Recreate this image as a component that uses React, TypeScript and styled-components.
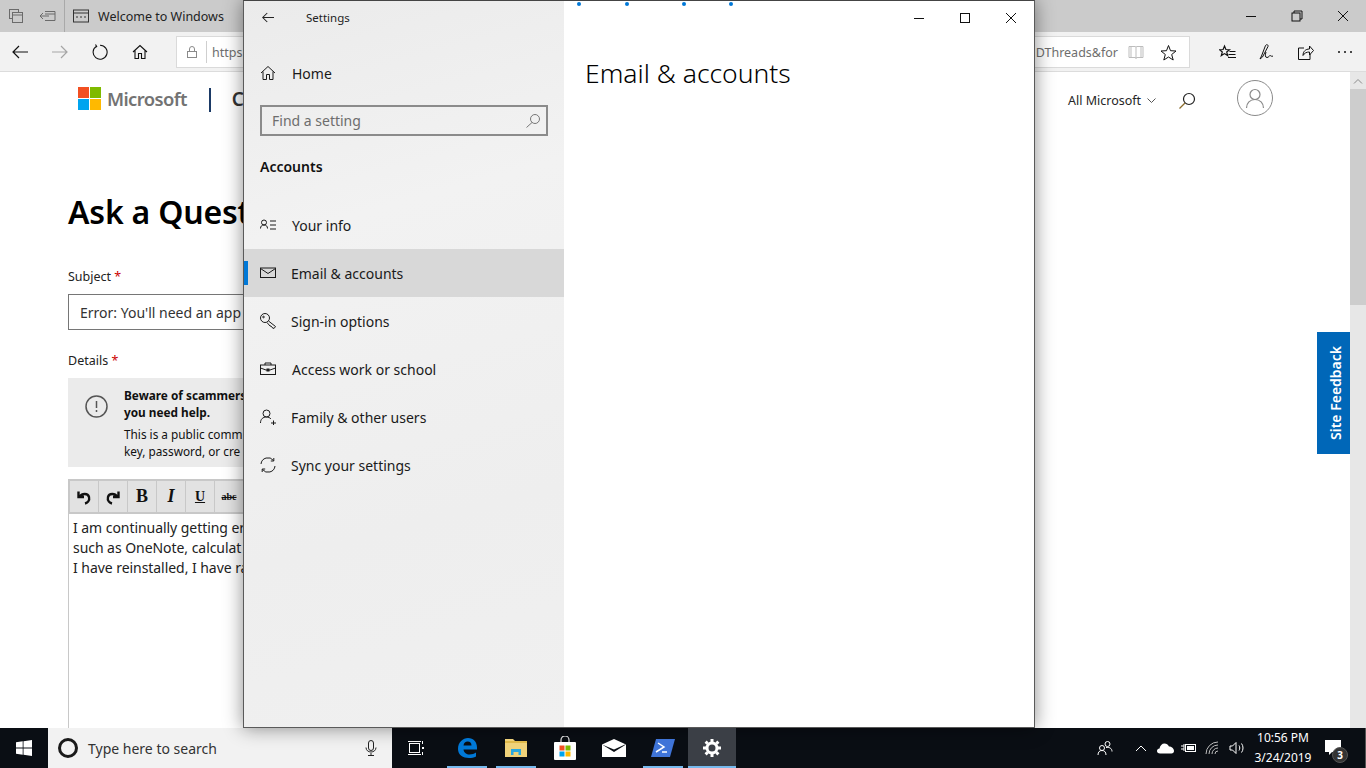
import React from 'react';
import styled, { createGlobalStyle } from 'styled-components';

const Global = createGlobalStyle`
  html, body { margin: 0; padding: 0; height: 100%; overflow: hidden; background: #fff; }
  body { font-family: 'Noto Sans', 'Open Sans', sans-serif; color: #000; }
  * { box-sizing: border-box; }
  svg { display: block; flex-shrink: 0; }
`;

const Desktop = styled.div`
  position: relative;
  width: 1366px;
  height: 768px;
  display: flex;
  flex-direction: column;
  overflow: hidden;
`;

/* browser window */
const Browser = styled.div`
  height: 728px;
  display: flex;
  flex-direction: column;
`;

const TabBar = styled.div`
  height: 32px;
  background: #cbcbcb;
  display: flex;
  align-items: center;
`;

const TabIconBtn = styled.div`
  width: 32px;
  display: flex;
  justify-content: center;
`;

const TabSep = styled.div`
  width: 1px;
  height: 32px;
  background: #a9a9a9;
  margin-right: 8px;
`;

const TabTitle = styled.span`
  font-size: 12.5px;
  margin-left: 9px;
  color: #222;
  flex: 1;
`;

const ChromeCtl = styled.div`
  width: 46px;
  display: flex;
  justify-content: center;
`;

const Toolbar = styled.div`
  height: 40px;
  background: #f2f2f2;
  border-bottom: 1px solid #dcdcdc;
  display: flex;
  align-items: center;
  padding-top: 1px;
`;

const NavBtn = styled.div`
  width: 40px;
  display: flex;
  justify-content: center;
`;

const UrlBox = styled.div`
  width: 1014px;
  height: 32px;
  margin: 0 18px 0 16px;
  background: #fff;
  border: 1px solid #dadada;
  display: flex;
  align-items: center;
  font-size: 12.5px;
  color: #6e6e6e;
`;

const LockWrap = styled.div`
  width: 30px;
  height: 22px;
  border-right: 1px solid #cfcfcf;
  display: flex;
  justify-content: center;
  align-items: center;
`;

const UrlText = styled.span`
  margin-left: 5px;
  flex: 1;
`;

const UrlEnd = styled.span`
  margin-right: 2px;
`;

const UrlIcon = styled.div<{ $end?: number }>`
  width: 32px;
  display: flex;
  justify-content: center;
  margin-right: ${(p) => p.$end ?? 0}px;
`;

const ToolBtn = styled.div`
  width: 39px;
  display: flex;
  justify-content: center;
`;

const PageArea = styled.div`
  flex: 1;
  display: flex;
  min-height: 0;
`;

const Page = styled.main`
  position: relative;
  flex: 1;
  background: #fff;
  overflow: hidden;
  padding-left: 68px;
`;

const Scrollbar = styled.div`
  width: 16px;
  background: #e7e7e7;
  display: flex;
  flex-direction: column;
`;

const ScrollUp = styled.div`
  height: 17px;
  display: flex;
  align-items: center;
  justify-content: center;
`;

const ScrollThumb = styled.div`
  height: 216px;
  background: #cdcdcd;
`;

const SiteHeader = styled.div`
  height: 56px;
  display: flex;
  align-items: flex-start;
  padding-top: 15px;
  margin-left: 10px;
`;

const Brand = styled.span`
  font-size: 18.4px;
  font-weight: 600;
  color: #737373;
  letter-spacing: -0.6px;
  margin-left: 6px;
  line-height: 24px;
`;

const BrandSep = styled.div`
  width: 2px;
  height: 24px;
  background: #1b3a66;
  margin: 1px 21px 0 22px;
`;

const BrandNext = styled.span`
  font-size: 19px;
  color: #333;
  line-height: 24px;
  font-weight: 600;
`;

const HeaderRight = styled.div`
  position: absolute;
  left: 1068px;
  top: 15px;
  display: flex;
  align-items: center;
  height: 26px;
  font-size: 12.5px;
  color: #262626;
`;

const Chevron = styled.div`
  margin: 2px 0 0 6px;
`;

const HeaderSearch = styled.div`
  margin: 2px 0 0 22px;
`;

const Avatar = styled.div`
  width: 36px;
  height: 36px;
  border: 1px solid #8a8a8a;
  border-radius: 50%;
  margin: -4px 0 0 41px;
  display: flex;
  align-items: center;
  justify-content: center;
`;

const Heading = styled.h1`
  margin: 60px 0 0;
  font-size: 32px;
  line-height: 48px;
  font-weight: 600;
  letter-spacing: -0.2px;
  white-space: nowrap;
`;

const FieldLabel = styled.div<{ $top: number }>`
  font-size: 12.5px;
  line-height: 18px;
  margin-top: ${(p) => p.$top}px;
  color: #222;
`;

const Required = styled.span`
  color: #c00;
`;

const SubjectInput = styled.div`
  width: 700px;
  height: 36px;
  margin-top: 8px;
  border: 1px solid #767676;
  padding-left: 11px;
  font-size: 14px;
  line-height: 35px;
  color: #333;
  white-space: nowrap;
`;

const Notice = styled.div`
  width: 700px;
  height: 89px;
  margin-top: 8px;
  background: #ebebeb;
  display: flex;
  padding: 9px 0 0 17px;
`;

const NoticeIcon = styled.div`
  width: 39px;
  padding-top: 8px;
`;

const NoticeBody = styled.div`
  font-size: 11.8px;
  line-height: 17px;
  color: #111;
  white-space: nowrap;
`;

const NoticeStrong = styled.div`
  font-weight: 700;
  margin-bottom: 5px;
`;

const Editor = styled.div`
  width: 700px;
  height: 300px;
  margin-top: 12px;
  border: 1px solid #c8c8c8;
  border-bottom: none;
`;

const EditorTools = styled.div`
  height: 34px;
  background: #e2e2e2;
  border: 1px solid #c8c8c8;
  border-width: 1px 1px 2px 1px;
  display: flex;
`;

const EditorBtn = styled.div`
  width: 29px;
  border-right: 1px solid #c8c8c8;
  display: flex;
  align-items: center;
  justify-content: center;
  font-family: 'Liberation Serif', serif;
  color: #111;
`;

const FmtLetter = styled.span<{ $i?: boolean; $u?: boolean; $s?: boolean; $size: number }>`
  font-size: ${(p) => p.$size}px;
  font-weight: 700;
  font-style: ${(p) => (p.$i ? 'italic' : 'normal')};
  text-decoration: ${(p) => (p.$u ? 'underline' : p.$s ? 'line-through' : 'none')};
`;

const EditorText = styled.div`
  padding: 4px 4px;
  font-size: 14px;
  line-height: 20px;
  color: #222;
  letter-spacing: -0.05px;
  white-space: nowrap;
`;

const Feedback = styled.div`
  position: absolute;
  right: 0;
  top: 260px;
  width: 33px;
  height: 122px;
  padding-right: 3px;
  background: #0067b8;
  color: #fff;
  font-size: 14px;
  font-weight: 600;
  display: flex;
  align-items: center;
  justify-content: center;
  writing-mode: vertical-rl;
  transform: rotate(180deg);
`;

/* settings window */
const SettingsWindow = styled.section`
  position: absolute;
  left: 243px;
  top: 0;
  width: 792px;
  height: 728px;
  border: 1px solid #5a5a5a;
  border-top-color: #444;
  display: flex;
  background: #fff;
  box-shadow: 0 0 18px rgba(0, 0, 0, 0.45);
`;

const Sidebar = styled.aside`
  width: 320px;
  background: linear-gradient(165deg, #ebebeb 0%, #f2f2f2 30%, #eeeeee 70%, #f0f0f0 100%);
  display: flex;
  flex-direction: column;
`;

const TitleRow = styled.div`
  height: 33px;
  display: flex;
  align-items: center;
  padding-left: 18px;
  font-size: 11.5px;
  color: #222;
`;

const TitleLabel = styled.span`
  margin-left: 32px;
`;

const HomeWrap = styled.div`
  margin-top: 15px;
`;

const NavRow = styled.div<{ $active?: boolean; $gap?: number }>`
  position: relative;
  height: 48px;
  display: flex;
  align-items: center;
  padding-left: 16px;
  gap: ${(p) => p.$gap ?? 15}px;
  font-size: 14px;
  color: #1a1a1a;
  background: ${(p) => (p.$active ? '#d8d8d8' : 'transparent')};
`;

const ActiveBar = styled.div`
  position: absolute;
  left: 0;
  top: 12px;
  width: 4px;
  height: 24px;
  background: #0078d7;
`;

const SearchBox = styled.div`
  height: 31px;
  margin: 8px 16px 0;
  border: 2px solid #8b8b8b;
  display: flex;
  align-items: center;
  justify-content: space-between;
  padding: 0 6px 0 10px;
  font-size: 14px;
  color: #6d6d6d;
`;

const SectionTitle = styled.div`
  margin: 20px 0 23px 16px;
  height: 22px;
  line-height: 22px;
  font-size: 14px;
  font-weight: 600;
  color: #111;
`;

const Content = styled.div`
  position: relative;
  flex: 1;
  padding: 53px 0 0 21px;
`;

const ProgressDots = styled.div`
  position: absolute;
  top: 1px;
  left: 13px;
  display: flex;
`;

const Dot = styled.i<{ $gap: number }>`
  display: block;
  width: 4px;
  height: 4px;
  border-radius: 50%;
  background: #0078d7;
  margin-right: ${(p) => p.$gap}px;
`;

const PageTitle = styled.h2`
  margin: 0;
  font-size: 26.5px;
  line-height: 38px;
  font-weight: 300;
  color: #000;
`;

const WindowCtls = styled.div`
  position: absolute;
  top: 0;
  right: 0;
  display: flex;
`;

const WindowCtl = styled.div`
  width: 46px;
  height: 33px;
  display: flex;
  align-items: center;
  justify-content: center;
`;

/* taskbar */
const Taskbar = styled.footer`
  height: 40px;
  background: #0a0e14;
  display: flex;
  align-items: stretch;
`;

const StartBtn = styled.div`
  width: 48px;
  display: flex;
  align-items: center;
  justify-content: center;
`;

const TaskSearch = styled.div`
  width: 344px;
  background: #f2f2f2;
  display: flex;
  align-items: center;
  padding: 0 13px 0 10px;
  font-size: 14px;
  color: #333;
`;

const Cortana = styled.div`
  width: 20px;
  height: 20px;
  border: 3px solid #1a1a1a;
  border-radius: 50%;
  margin-right: 10px;
`;

const TaskSearchText = styled.span`
  flex: 1;
`;

const TaskView = styled.div`
  width: 48px;
  margin-right: 3px;
  display: flex;
  align-items: center;
  justify-content: center;
`;

const TaskApp = styled.div<{ $open?: boolean; $active?: boolean }>`
  position: relative;
  width: 48px;
  margin-right: 1px;
  display: flex;
  align-items: center;
  justify-content: center;
  background: ${(p) => (p.$active ? '#3b3f46' : 'transparent')};

  &::after {
    content: '';
    display: ${(p) => (p.$open ? 'block' : 'none')};
    position: absolute;
    bottom: 0;
    left: ${(p) => (p.$active ? 0 : 4)}px;
    right: ${(p) => (p.$active ? 0 : 4)}px;
    height: 2px;
    background: #76b9ed;
  }
`;

const Tray = styled.div`
  margin-left: auto;
  display: flex;
  align-items: center;
  color: #fff;
`;

const TrayIcon = styled.div<{ $w: number }>`
  width: ${(p) => p.$w}px;
  display: flex;
  justify-content: center;
`;

const Clock = styled.div`
  width: 68px;
  text-align: center;
  font-size: 12px;
  line-height: 20px;
  color: #fff;
`;

const NotifWrap = styled.div`
  position: relative;
  width: 40px;
  padding-left: 8px;
`;

const NotifBadge = styled.span`
  position: absolute;
  left: 15px;
  top: 7px;
  width: 16px;
  height: 16px;
  border-radius: 50%;
  background: #333;
  border: 1px solid #555;
  color: #fff;
  font-size: 10px;
  font-weight: 700;
  line-height: 14px;
  text-align: center;
`;

const ShowDesktop = styled.div`
  width: 9px;
  height: 40px;
  border-right: 1px solid #555;
`;

/* drawings */
const Ic = ({ s = 16, h, c = '#1a1a1a', w = 1, children }: { s?: number; h?: number; c?: string; w?: number; children: React.ReactNode }) => (
  <svg width={s} height={h ?? s} viewBox={`0 0 ${s} ${h ?? s}`} fill="none" stroke={c} strokeWidth={w}>
    {children}
  </svg>
);

const Arrow = ({ c, flip, small }: { c: string; flip?: boolean; small?: boolean }) => (
  <svg
    width={small ? 12 : 16}
    height={small ? 11 : 14}
    viewBox="0 0 16 14"
    fill="none"
    stroke={c}
    strokeWidth={small ? 1.4 : 1.2}
    style={flip ? { transform: 'scaleX(-1)' } : undefined}
  >
    <path d="M1 7h15M7 1 1 7l6 6" />
  </svg>
);

const MsLogo = () => (
  <svg width="23" height="23" viewBox="0 0 23 23">
    <rect width="11" height="11" fill="#f25022" />
    <rect x="12" width="11" height="11" fill="#7fba00" />
    <rect y="12" width="11" height="11" fill="#00a4ef" />
    <rect x="12" y="12" width="11" height="11" fill="#ffb900" />
  </svg>
);

const navItems = [
  {
    label: 'Your info',
    gap: 16,
    icon: (
      <Ic s={16}>
        <circle cx="4" cy="5.500" r="2.500" />
        <path d="M.5 11.500c0-2.500 1.500-3.500 3.500-3.500s3.500 1 3.500 3.500M10 4h6M10 8h6M10 12h6" />
      </Ic>
    ),
  },
  {
    label: 'Email & accounts',
    active: true,
    icon: (
      <Ic s={16}>
        <rect x=".5" y="3" width="15" height="9.500" />
        <path d="M.5 3.500 8 8.500l7.500-5" />
      </Ic>
    ),
  },
  {
    label: 'Sign-in options',
    icon: (
      <Ic s={16}>
        <circle cx="5" cy="5" r="4.500" />
        <circle cx="3.500" cy="4" r=".8" />
        <path d="m8.500 8 7 5.500-1.500 2-2-1-1-1.500-1 0-3-3.500" />
      </Ic>
    ),
  },
  {
    label: 'Access work or school',
    gap: 16,
    icon: (
      <Ic s={16}>
        <rect x=".5" y="4" width="15" height="9.500" />
        <path d="M5 4V2h6v2M.5 7 6 9h4l5.500-2" />
        <rect x="6.500" y="7.500" width="3" height="3" fill="#1a1a1a" stroke="none" />
      </Ic>
    ),
  },
  {
    label: 'Family & other users',
    icon: (
      <Ic s={16}>
        <circle cx="6.500" cy="4.500" r="3.500" />
        <path d="M.5 14c0-4 2.500-6 6-6 2 0 3.500.8 4.500 2M11 14h5M13.500 11.500v5" />
      </Ic>
    ),
  },
  {
    label: 'Sync your settings',
    icon: (
      <Ic s={16}>
        <path d="M1 7a7 7 0 0 1 12.500-3.500M15 9a7 7 0 0 1-12.500 3.500M13.800 1v3h-3M2.200 15v-3h3" />
      </Ic>
    ),
  },
];

export default function App() {
  return (
    <Desktop>
      <Global />
      <Browser>
        <TabBar>
          <TabIconBtn>
            <Ic s={16} c="#6b6b6b">
              <rect x="1.500" y="1.500" width="9" height="9" />
              <rect x="4.500" y="4.500" width="10" height="10" fill="#cbcbcb" />
              <path d="M4.500 7h10" />
            </Ic>
          </TabIconBtn>
          <TabIconBtn>
            <Ic s={16} c="#6b6b6b">
              <path d="M5 3.500h10v9H5M0 8h9M3 5 0 8l3 3M5 6h10" />
            </Ic>
          </TabIconBtn>
          <TabSep />
          <Ic s={16} c="#333">
            <rect x=".5" y="2" width="15" height="12" />
            <path d="M.5 5h15M3 9h2M7 9h2M11 9h2" />
          </Ic>
          <TabTitle>Welcome to Windows</TabTitle>
          <ChromeCtl>
            <Ic s={12} c="#111"><path d="M1 6.500h10" /></Ic>
          </ChromeCtl>
          <ChromeCtl>
            <Ic s={12} c="#111"><rect x="1" y="3" width="8" height="8" /><path d="M3 3V1h8v8H9" /></Ic>
          </ChromeCtl>
          <ChromeCtl>
            <Ic s={12} c="#111"><path d="m1 1 10 10M11 1 1 11" /></Ic>
          </ChromeCtl>
        </TabBar>
        <Toolbar>
          <NavBtn><Arrow c="#111" /></NavBtn>
          <NavBtn><Arrow c="#a5a5a5" flip /></NavBtn>
          <NavBtn>
            <Ic s={16} c="#111" w={1.1}>
              <path d="M4.500 2.200a7 7 0 1 0 3.500-1M3.500 .5l1.200 2-2 1.200" />
            </Ic>
          </NavBtn>
          <NavBtn>
            <Ic s={16} c="#111" w={1.1}>
              <path d="M1 8 8 1.500 15 8M3 6.500V14.500H6.500V9.500h3v5H13V6.500" />
            </Ic>
          </NavBtn>
          <UrlBox>
            <LockWrap>
              <Ic s={12} c="#8a8a8a">
                <rect x="1.500" y="5.500" width="9" height="6" />
                <path d="M3.500 5.500V3a2.500 2.500 0 0 1 5 0v2.500" />
              </Ic>
            </LockWrap>
            <UrlText>https:</UrlText>
            <UrlEnd>DThreads&amp;for</UrlEnd>
            <UrlIcon>
              <Ic s={16} c="#bdbdbd">
                <path d="M1 2.500h6.500l.5 1 .5-1H15v11H8.500L8 14.500l-.5-1H1zM8 3.500v11M3 2.500v11M13 2.500v11" />
              </Ic>
            </UrlIcon>
            <UrlIcon $end={5}>
              <Ic s={17} c="#111">
                <path d="m8.500 1.500 2 5.200 5.500.3-4.300 3.500 1.500 5.500-4.700-3-4.700 3 1.500-5.500L1 7l5.500-.3z" />
              </Ic>
            </UrlIcon>
          </UrlBox>
          <ToolBtn>
            <Ic s={17} c="#111" w={1.2}>
              <path d="m5.500 2 1.400 3.500 3.600.2-2.800 2.300 1 3.600-3.200-2-3.200 2 1-3.600L.5 5.700l3.600-.2zM10.500 7.500h6M9.500 10.500h7M9 13.500h8" />
            </Ic>
          </ToolBtn>
          <ToolBtn>
            <Ic s={18} c="#111">
              <path d="M3.500 13 2 16l2.500-2L10 3.500C10.500 2 8.800 .8 7.500 2.500zM8 9c-1 3-1 5.500 1 5.500s2-2 3-2 1.500 1.500 3 .5" />
            </Ic>
          </ToolBtn>
          <ToolBtn>
            <Ic s={17} c="#111">
              <path d="M7 4H1.500v11.500h11.500V10M6 11.500c0-4 2.500-6.500 6.500-6.500V2l4 4.500-4 4.500V8C9.500 8 7.500 9 6 11.500z" />
            </Ic>
          </ToolBtn>
          <ToolBtn>
            <Ic s={16} c="#111" w={0}>
              <circle cx="2" cy="8" r="1" fill="#111" />
              <circle cx="8" cy="8" r="1" fill="#111" />
              <circle cx="14" cy="8" r="1" fill="#111" />
            </Ic>
          </ToolBtn>
        </Toolbar>
        <PageArea>
          <Page>
            <SiteHeader>
              <MsLogo />
              <Brand>Microsoft</Brand>
              <BrandSep />
              <BrandNext>C</BrandNext>
            </SiteHeader>
            <HeaderRight>
              All Microsoft
              <Chevron>
                <Ic s={9} h={6} c="#555"><path d="m.5 .5 4 4 4-4" /></Ic>
              </Chevron>
              <HeaderSearch>
                <Ic s={18} c="#222" w={1.2}>
                  <circle cx="11" cy="7" r="5.500" />
                  <path d="M7 11 1.500 16.500" stroke="#8a6a2a" />
                </Ic>
              </HeaderSearch>
              <Avatar>
                <Ic s={22} c="#8a8a8a" w={1.2}>
                  <circle cx="11" cy="7.500" r="5" />
                  <path d="M2.500 21c0-5 3.500-8.500 8.500-8.500s8.500 3.500 8.500 8.500" />
                </Ic>
              </Avatar>
            </HeaderRight>
            <Heading>Ask a Quest</Heading>
            <FieldLabel $top={32}>Subject <Required>*</Required></FieldLabel>
            <SubjectInput>Error: You'll need an app</SubjectInput>
            <FieldLabel $top={22}>Details <Required>*</Required></FieldLabel>
            <Notice>
              <NoticeIcon>
                <Ic s={23} c="#555" w={1.5}>
                  <circle cx="11.500" cy="11.500" r="10.500" />
                  <path d="M11.500 6v7M11.500 15v2" />
                </Ic>
              </NoticeIcon>
              <NoticeBody>
                <NoticeStrong>Beware of scammers<br />you need help.</NoticeStrong>
                This is a public comm<br />
                key, password, or cre
              </NoticeBody>
            </Notice>
            <Editor>
              <EditorTools>
                <EditorBtn>
                  <Ic s={16} c="#111" w={2.4}><path d="M4 7.500c2-3.500 8-3.500 9 .5s-2 6-4 6.500M2.500 2.500v5.500h5.500" /></Ic>
                </EditorBtn>
                <EditorBtn>
                  <Ic s={16} c="#111" w={2.4}><path d="M12 7.500c-2-3.500-8-3.500-9 .5s2 6 4 6.500M13.500 2.500v5.500H8" /></Ic>
                </EditorBtn>
                <EditorBtn><FmtLetter $size={18}>B</FmtLetter></EditorBtn>
                <EditorBtn><FmtLetter $i $size={18}>I</FmtLetter></EditorBtn>
                <EditorBtn><FmtLetter $u $size={14}>U</FmtLetter></EditorBtn>
                <EditorBtn><FmtLetter $s $size={10}>abc</FmtLetter></EditorBtn>
              </EditorTools>
              <EditorText>
                I am continually getting er<br />
                such as OneNote, calculat<br />
                I have reinstalled, I have ra
              </EditorText>
            </Editor>
            <Feedback>Site Feedback</Feedback>
          </Page>
          <Scrollbar>
            <ScrollUp>
              <Ic s={10} h={6} c="#8a8a8a"><path d="m1 5.500 4-4 4 4" /></Ic>
            </ScrollUp>
            <ScrollThumb />
          </Scrollbar>
        </PageArea>
      </Browser>

      <SettingsWindow>
        <Sidebar>
          <TitleRow>
            <Arrow c="#222" small />
            <TitleLabel>Settings</TitleLabel>
          </TitleRow>
          <HomeWrap>
            <NavRow $gap={16}>
              <Ic s={16}>
                <path d="M1 8 8 1.500 15 8M3 6.500V14.500H6.500V9.500h3v5H13V6.500" />
              </Ic>
              Home
            </NavRow>
          </HomeWrap>
          <SearchBox>
            Find a setting
            <Ic s={14} c="#777">
              <circle cx="9" cy="5" r="4.500" />
              <path d="M6 8.500 .5 13.500" />
            </Ic>
          </SearchBox>
          <SectionTitle>Accounts</SectionTitle>
          {navItems.map((item) => (
            <NavRow key={item.label} $active={item.active} $gap={item.gap}>
              {item.active && <ActiveBar />}
              {item.icon}
              {item.label}
            </NavRow>
          ))}
        </Sidebar>
        <Content>
          <ProgressDots>
            <Dot $gap={44} />
            <Dot $gap={53} />
            <Dot $gap={43} />
            <Dot $gap={0} />
          </ProgressDots>
          <PageTitle>Email &amp; accounts</PageTitle>
          <WindowCtls>
            <WindowCtl><Ic s={12} c="#111"><path d="M1 6.500h10" /></Ic></WindowCtl>
            <WindowCtl><Ic s={12} c="#111"><rect x="1.500" y="1.500" width="9" height="9" /></Ic></WindowCtl>
            <WindowCtl><Ic s={12} c="#111"><path d="m1 1 10 10M11 1 1 11" /></Ic></WindowCtl>
          </WindowCtls>
        </Content>
      </SettingsWindow>

      <Taskbar>
        <StartBtn>
          <svg width="16" height="16" viewBox="0 0 16 16" fill="#fff">
            <path d="M0 2.300 6.700 1.300v6.300H0zM7.500 1.200 16 0v7.600H7.500zM0 8.400h6.700v6.400L0 13.800zM7.500 8.400H16V16l-8.500-1.200z" />
          </svg>
        </StartBtn>
        <TaskSearch>
          <Cortana />
          <TaskSearchText>Type here to search</TaskSearchText>
          <Ic s={16} c="#222">
            <rect x="5.500" y=".5" width="5" height="10" rx="2.500" />
            <path d="M3 7.500c0 6 10 6 10 0M8 13v3M5 15.500h6" />
          </Ic>
        </TaskSearch>
        <TaskView>
          <Ic s={18} c="#fff">
            <rect x="2.500" y="4.500" width="10" height="9" />
            <path d="M1 2.500h13M1 15.500h13M15.500 2v3M15.500 13v3" />
            <rect x="15" y="8" width="2" height="2" fill="#fff" stroke="none" />
          </Ic>
        </TaskView>
        <TaskApp $open>
          <svg width="22" height="22" viewBox="0 0 22 22" fill="none">
            <path d="M2 12C2 5 7 1 12 1c5.500 0 9 4 9 9.500v2H7.500c.5 3.500 3 5 6 5 2.500 0 5-1 6.500-2v4c-2 1-4.500 1.500-7 1.500-6 0-11-3-11-9zm5.500-3.500h8c0-2.500-1.500-4-3.800-4-2.200 0-3.900 1.500-4.200 4z" fill="#0078d7" />
          </svg>
        </TaskApp>
        <TaskApp $open>
          <svg width="22" height="20" viewBox="0 0 22 20">
            <path d="M0 1h8l2 2h12v16H0z" fill="#f0d27a" />
            <rect y="3" width="22" height="2" fill="#e0b94a" />
            <path d="M6 17v-6h10v6h-2.500v-3h-5v3z" fill="#29a8e0" />
          </svg>
        </TaskApp>
        <TaskApp>
          <svg width="24" height="24" viewBox="0 0 24 24">
            <path d="M8 7V4a4 4 0 0 1 8 0v3" fill="none" stroke="#ddd" strokeWidth="1.200" />
            <rect x="1" y="6" width="22" height="18" rx="1" fill="#fff" />
            <rect x="6.500" y="9.500" width="5" height="5" fill="#f25022" />
            <rect x="12.500" y="9.500" width="5" height="5" fill="#7fba00" />
            <rect x="6.500" y="15.500" width="5" height="5" fill="#00a4ef" />
            <rect x="12.500" y="15.500" width="5" height="5" fill="#ffb900" />
          </svg>
        </TaskApp>
        <TaskApp>
          <svg width="24" height="18" viewBox="0 0 24 18">
            <path d="M0 5.500 12 0l12 5.500V18H0z" fill="#fff" />
            <path d="M0 5.500 12 13l12-7.500-1 0L12 10.500z" fill="#0a0e14" />
          </svg>
        </TaskApp>
        <TaskApp $open>
          <svg width="24" height="18" viewBox="0 0 24 18">
            <path d="M5 0h19l-5 18H0z" fill="#3f74d8" />
            <path d="m7 4 6 4-8 5" fill="none" stroke="#fff" strokeWidth="1.500" />
            <path d="M11 13h5" stroke="#fff" strokeWidth="1.500" />
          </svg>
        </TaskApp>
        <TaskApp $open $active>
          <svg width="18" height="18" viewBox="0 0 18 18" fill="none">
            <circle cx="9" cy="9" r="5" stroke="#fff" strokeWidth="3" />
            <path d="M9 0v3M9 15v3M0 9h3M15 9h3M2.600 2.600l2.100 2.100M13.300 13.300l2.100 2.100M2.600 15.400l2.100-2.100M13.300 4.700l2.100-2.100" stroke="#fff" strokeWidth="3" />
          </svg>
        </TaskApp>
        <Tray>
          <TrayIcon $w={46}>
            <Ic s={16} c="#fff">
              <circle cx="5" cy="8" r="2.500" />
              <circle cx="10.500" cy="4" r="2.500" />
              <path d="M1 15c0-3 1.500-4.500 4-4.500s4 1.500 4 4.500M9 7.500c3-.5 6 .5 6 4" />
            </Ic>
          </TrayIcon>
          <TrayIcon $w={25}>
            <Ic s={12} h={8} c="#fff"><path d="m1 7 5-5 5 5" /></Ic>
          </TrayIcon>
          <TrayIcon $w={24}>
            <svg width="17" height="11" viewBox="0 0 17 11" fill="#fff">
              <path d="M3 10.500C1 10.500 0 9.500 0 8c0-1.500 1.200-2.500 2.500-2.500C3 2.500 5 .5 7.500.5c2 0 3.500 1 4.500 3 2.500 0 5 2 5 4.500 0 1.500-1 2.500-2.500 2.500z" />
            </svg>
          </TrayIcon>
          <TrayIcon $w={24}>
            <svg width="16" height="12" viewBox="0 0 16 12" fill="none" stroke="#fff">
              <rect x="4.500" y="2.500" width="10" height="7" />
              <rect x="6" y="4" width="7" height="4" fill="#fff" stroke="none" />
              <path d="M0 4h3M0 7h3M3 2v7" />
            </svg>
          </TrayIcon>
          <TrayIcon $w={24}>
            <svg width="16" height="14" viewBox="0 0 16 14" fill="none" stroke="#bdbdbd">
              <path d="M1 13A12 12 0 0 1 13 1M4 13a9 9 0 0 1 9-9M7 13a6 6 0 0 1 6-6M10 13a3 3 0 0 1 3-3" />
            </svg>
          </TrayIcon>
          <TrayIcon $w={24}>
            <svg width="16" height="14" viewBox="0 0 16 14" fill="none" stroke="#fff">
              <path d="M1 5h2.500L7 1.500v11L3.500 9H1zM10 4.500c1 1.500 1 3.500 0 5M12.500 2.500c2 2.500 2 6.500 0 9" />
            </svg>
          </TrayIcon>
          <Clock>10:56 PM<br />3/24/2019</Clock>
          <NotifWrap>
            <svg width="16" height="16" viewBox="0 0 16 16" fill="#fff">
              <path d="M0 0h16v12H7l-3 3v-3H0z" />
            </svg>
            <NotifBadge>3</NotifBadge>
          </NotifWrap>
          <ShowDesktop />
        </Tray>
      </Taskbar>
    </Desktop>
  );
}
